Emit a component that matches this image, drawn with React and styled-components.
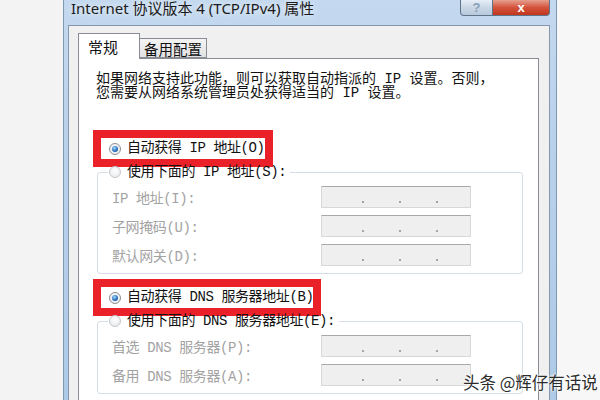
import React from "react";
import styled, { createGlobalStyle } from "styled-components";

const GlobalStyle = createGlobalStyle`
  html, body {
    margin: 0;
    padding: 0;
  }
  body {
    background: #f5f5f5;
    width: 600px;
    height: 400px;
    overflow: hidden;
  }
`;

const Page = styled.div`
  position: relative;
  width: 600px;
  height: 400px;
  overflow: hidden;
  display: flex;
  box-sizing: border-box;
  padding-left: 63px;
  background: linear-gradient(to right, #f3f3f3 63px, #f7f7f7 556px);
`;

const Window = styled.div`
  width: 494px;
  height: 400px;
  display: flex;
  flex-direction: column;
  box-sizing: border-box;
  border-left: 1px solid #7d98b5;
  border-right: 1px solid #7d98b5;
  padding: 0 6px 0 4px;
  background: linear-gradient(to bottom, #c4d9ef, #b9d0ea 40%, #aecae7);
`;

const TitleBar = styled.div`
  height: 25px;
  flex-shrink: 0;
  display: flex;
  justify-content: space-between;
  align-items: flex-start;
`;

const Title = styled.div`
  padding-left: 3px;
  font-family: "Noto Sans", "Noto Sans CJK SC", sans-serif;
  font-size: 15px;
  line-height: 17px;
  color: #1b1b1b;
  text-shadow: 0 0 6px rgba(255, 255, 255, 0.9);
  white-space: nowrap;
`;

const Buttons = styled.div`
  display: flex;
`;

const CaptionButton = styled.div`
  height: 16px;
  box-sizing: border-box;
  width: ${(p) => p.$w}px;
  display: flex;
  align-items: center;
  justify-content: center;
  font-family: "Liberation Sans", sans-serif;
  font-weight: bold;
  font-size: 13px;
  border: 1px solid #5f738b;
  border-top: none;
  border-radius: ${(p) => (p.$close ? "0 0 4px 0" : "0 0 0 4px")};
  border-left: ${(p) => (p.$close ? "none" : "1px solid #5f738b")};
  color: ${(p) => (p.$close ? "#ffffff" : "#8a9fb6")};
  background: ${(p) =>
    p.$close
      ? "linear-gradient(to bottom, #e6a08f, #d4533c 50%, #c1361f)"
      : "linear-gradient(to bottom, #e6eef7, #c9d7e6 50%, #b8c9dc)"};
`;

const Client = styled.div`
  flex: 1;
  display: flex;
  flex-direction: column;
  background: #f0f0f0;
  border: 1px solid #8397ad;
  border-bottom: none;
  padding: 7px 10px 0 9px;
`;

const Tabs = styled.div`
  display: flex;
  align-items: flex-end;
  height: 25px;
`;

const Tab = styled.div`
  position: relative;
  z-index: 1;
  box-sizing: border-box;
  width: ${(p) => (p.$active ? 62 : 67)}px;
  height: ${(p) => (p.$active ? 26 : 20)}px;
  margin-bottom: ${(p) => (p.$active ? -1 : 0)}px;
  border: 1px solid #898c95;
  border-bottom: ${(p) => (p.$active ? "none" : "1px solid #898c95")};
  border-left: ${(p) => (p.$active ? "1px solid #898c95" : "none")};
  background: ${(p) =>
    p.$active ? "#ffffff" : "linear-gradient(to bottom, #f4f4f4, #e2e2e2)"};
  font-family: "Noto Sans CJK SC", sans-serif;
  font-size: ${(p) => (p.$active ? 15 : 14.5)}px;
  line-height: 18px;
  color: #111;
  padding-left: ${(p) => (p.$active ? 9 : 4)}px;
  padding-top: ${(p) => (p.$active ? 4 : 1)}px;
`;

const Panel = styled.div`
  flex: 1;
  display: flex;
  flex-direction: column;
  align-items: flex-start;
  background: #ffffff;
  border: 1px solid #898c95;
  border-bottom: none;
  padding-top: 13px;
  font-family: "Liberation Mono", "Noto Sans CJK SC", monospace;
  font-size: 14px;
  color: #111;
`;

const Intro = styled.p`
  margin: 0 0 0 17px;
  line-height: 14px;
  white-space: nowrap;
`;

const Highlight = styled.div`
  margin: ${(p) => p.$top}px 0 0 14px;
  border: 8px solid #ea2128;
  background: #ffffff;
  padding: 0 0 0 8px;
`;

const Option = styled.label`
  display: flex;
  align-items: center;
  gap: 6px;
  height: 21px;
  line-height: 21px;
  letter-spacing: -0.4px;
  white-space: nowrap;
`;

const Radio = styled.span`
  width: 12px;
  height: 12px;
  flex-shrink: 0;
  box-sizing: border-box;
  border-radius: 50%;
  border: 1px solid ${(p) => (p.$disabled ? "#c4c8cc" : "#8a8e93")};
  background: radial-gradient(circle at 50% 40%, #ffffff, #e3e5e8);
  display: flex;
  align-items: center;
  justify-content: center;

  &::after {
    content: "";
    display: ${(p) => (p.$checked ? "block" : "none")};
    width: 6px;
    height: 6px;
    border-radius: 50%;
    background: radial-gradient(circle at 40% 35%, #a5dcfb, #2a6fbd 55%, #123f7d);
  }
`;

const Group = styled.fieldset`
  margin: 0 0 0 18px;
  width: 426px;
  box-sizing: border-box;
  border: 1px solid #d5dee6;
  border-radius: 3px;
  padding: 9px 0 7px 10px;
  display: flex;
  flex-direction: column;
  gap: 7px;
`;

const Legend = styled.legend`
  padding: 0 4px 0 1px;
  height: 10px;
  line-height: 10px;
  display: flex;
  align-items: center;
  gap: 6px;
  letter-spacing: -0.4px;
  white-space: nowrap;
  color: #111;
`;

const Row = styled.div`
  display: grid;
  grid-template-columns: 213px 150px;
  align-items: center;
`;

const FieldLabel = styled.span`
  padding-left: 4px;
  color: #a3a3a3;
  letter-spacing: -0.4px;
  white-space: nowrap;
`;

const IpBox = styled.div`
  height: 22px;
  box-sizing: border-box;
  background: #efefef;
  border: 1px solid #d8d8d8;
  border-top-color: #a9a9a9;
  display: flex;
  align-items: flex-end;
  gap: 35px;
  padding: 0 0 4px 40px;
`;

const Dot = styled.span`
  width: 2px;
  height: 2px;
  background: #a5a5a5;
`;

const Watermark = styled.div`
  position: absolute;
  left: 463px;
  top: 371px;
  font-family: "Noto Sans CJK SC", sans-serif;
  font-size: 16.5px;
  line-height: 22px;
  color: #2b2b2b;
  text-shadow: 0 0 2px #fff, 0 0 2px #fff, 0 0 3px #fff;
  white-space: nowrap;
`;

const IpField = () => (
  <IpBox>
    <Dot />
    <Dot />
    <Dot />
  </IpBox>
);

const ipRows = ["IP 地址(I):", "子网掩码(U):", "默认网关(D):"];
const dnsRows = ["首选 DNS 服务器(P):", "备用 DNS 服务器(A):"];

const App = () => {
  return (
    <>
      <GlobalStyle />
      <Page>
        <Window>
          <TitleBar>
            <Title>Internet 协议版本 4 (TCP/IPv4) 属性</Title>
            <Buttons>
              <CaptionButton $w={33}>?</CaptionButton>
              <CaptionButton $w={57} $close>
                x
              </CaptionButton>
            </Buttons>
          </TitleBar>
          <Client>
            <Tabs>
              <Tab $active>常规</Tab>
              <Tab>备用配置</Tab>
            </Tabs>
            <Panel>
              <Intro>
                如果网络支持此功能，则可以获取自动指派的 IP 设置。否则，
                <br />
                您需要从网络系统管理员处获得适当的 IP 设置。
              </Intro>

              <Highlight $top={30}>
                <Option>
                  <Radio $checked />
                  自动获得 IP 地址(O)
                </Option>
              </Highlight>

              <Group>
                <Legend>
                  <Radio $disabled />
                  使用下面的 IP 地址(S):
                </Legend>
                {ipRows.map((label) => (
                  <Row key={label}>
                    <FieldLabel>{label}</FieldLabel>
                    <IpField />
                  </Row>
                ))}
              </Group>

              <Highlight $top={5}>
                <Option>
                  <Radio $checked />
                  自动获得 DNS 服务器地址(B)
                </Option>
              </Highlight>

              <Group>
                <Legend>
                  <Radio $disabled />
                  使用下面的 DNS 服务器地址(E):
                </Legend>
                {dnsRows.map((label) => (
                  <Row key={label}>
                    <FieldLabel>{label}</FieldLabel>
                    <IpField />
                  </Row>
                ))}
              </Group>
            </Panel>
          </Client>
        </Window>
        <Watermark>头条 @辉仔有话说</Watermark>
      </Page>
    </>
  );
};

export default App;
